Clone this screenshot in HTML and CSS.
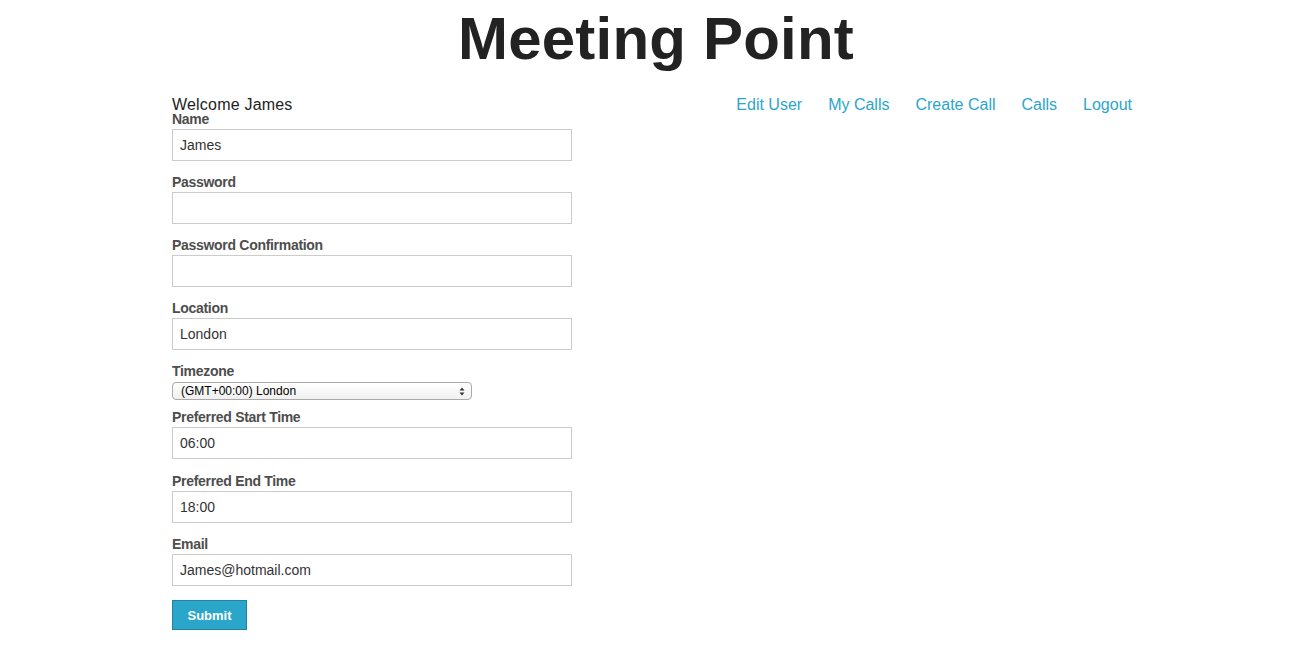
FILE: index.html
```html
<!DOCTYPE html>
<html>
<head>
<meta charset="utf-8">
<link rel="stylesheet" href="styles.css">
</head>
<body>
<h1 class="title">Meeting Point</h1>
<div class="page">
  <div class="topbar">
    <div class="welcome">Welcome James</div>
    <nav class="nav">
      <a href="#">Edit User</a>
      <a href="#">My Calls</a>
      <a href="#">Create Call</a>
      <a href="#">Calls</a>
      <a href="#">Logout</a>
    </nav>
  </div>
  <form class="form">
    <label class="label">Name</label>
    <input class="input" type="text" value="James">
    <label class="label">Password</label>
    <input class="input" type="password" value="">
    <label class="label">Password Confirmation</label>
    <input class="input" type="password" value="">
    <label class="label">Location</label>
    <input class="input" type="text" value="London">
    <label class="label">Timezone</label>
    <div class="select">
      <span>(GMT+00:00) London</span>
      <svg class="arrows" width="6" height="9" viewBox="0 0 6 9"><path d="M0.5 3.5 L3 0.5 L5.5 3.5 Z M0.5 5.5 L3 8.5 L5.5 5.5 Z" fill="#333"/></svg>
    </div>
    <label class="label">Preferred Start Time</label>
    <input class="input input-gap" type="text" value="06:00">
    <label class="label">Preferred End Time</label>
    <input class="input" type="text" value="18:00">
    <label class="label">Email</label>
    <input class="input" type="text" value="James@hotmail.com">
    <button class="submit" type="button">Submit</button>
  </form>
</div>
</body>
</html>
```
FILE: styles.css
```css
* { box-sizing: border-box; }
body {
  margin: 0;
  background: #fff;
  font-family: "Liberation Sans", Arial, Helvetica, sans-serif;
  color: #222;
}
.title {
  margin: 3px 0 0 0;
  font-size: 60px;
  line-height: 72px;
  font-weight: bold;
  text-align: center;
  color: #222;
  padding-left: 15px;
  letter-spacing: 0.2px;
}
.page {
  padding: 20px 165px 0 172px;
}
.topbar {
  display: flex;
  justify-content: space-between;
  align-items: flex-start;
}
.welcome {
  font-size: 16px;
  line-height: 20px;
  color: #222;
  letter-spacing: 0.2px;
}
.nav {
  display: flex;
  gap: 26px;
}
.nav a {
  font-size: 16px;
  line-height: 20px;
  color: #2ba6cb;
  text-decoration: none;
}
.form {
  display: flex;
  flex-direction: column;
  align-items: flex-start;
  margin-top: -3px;
}
.label {
  font-size: 14px;
  line-height: 15px;
  padding-bottom: 2px;
  font-weight: bold;
  color: #4d4d4d;
  letter-spacing: -0.3px;
}
.input {
  width: 400px;
  height: 32px;
  border: 1px solid #ccc;
  margin: 0 0 14px 0;
  padding: 0 7px;
  font-family: "Liberation Sans", Arial, sans-serif;
  font-size: 14px;
  color: #333;
  background: #fff;
  outline: none;
  border-radius: 0;
}
.input-gap {
  margin-bottom: 15px;
}
.select {
  width: 300px;
  height: 18px;
  margin: 1px 0 10px 0;
  border: 1px solid #aaa;
  border-radius: 4px;
  background: linear-gradient(#fff, #f0f0f0);
  display: flex;
  align-items: center;
  justify-content: space-between;
  padding: 0 6px 0 8px;
  font-size: 12px;
  color: #000;
}
.submit {
  margin-top: 0;
  width: 75px;
  height: 30px;
  background: #2ba6cb;
  border: 1px solid #2284a1;
  color: #fff;
  font-family: "Liberation Sans", Arial, sans-serif;
  font-weight: bold;
  font-size: 13px;
  padding: 0;
  cursor: pointer;
}
```
